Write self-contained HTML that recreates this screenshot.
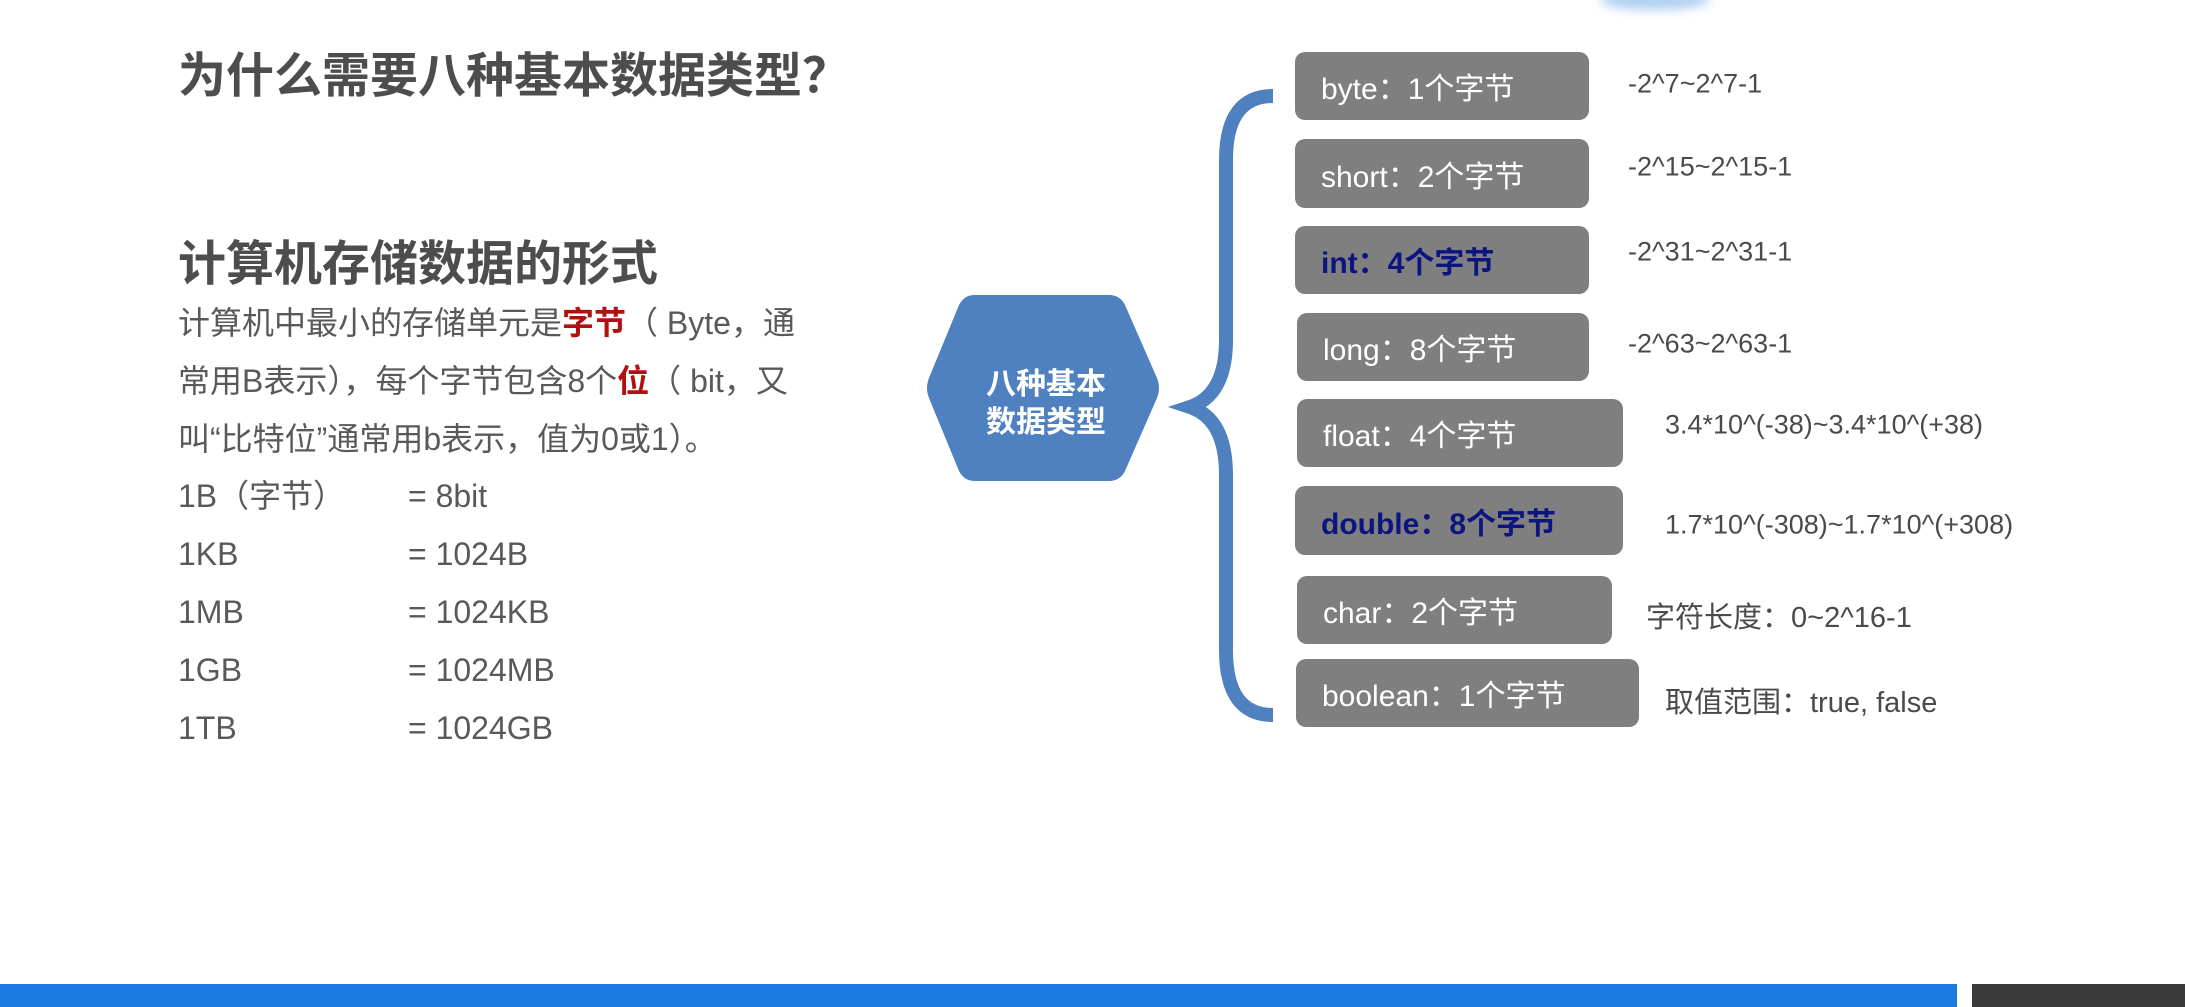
<!DOCTYPE html>
<html><head><meta charset="utf-8"><style>
*{margin:0;padding:0;box-sizing:border-box}
body{width:2185px;height:1007px;background:#fff;position:relative;overflow:hidden;font-family:"Liberation Sans","Noto Sans CJK SC",sans-serif;color:#595959}
.a{position:absolute;white-space:nowrap}
.t{font-weight:bold;color:#4d4d4d;font-size:48px}
.b{font-size:32px;line-height:58px}
.box{position:absolute;background:#7f7f7f;border-radius:10px;color:#fff;font-size:30px;padding-left:26px;display:flex;align-items:center}
.nv{color:#0c1480;font-weight:bold}
.r{position:absolute;font-size:27px;color:#4a4a4a;white-space:nowrap;transform:translateY(-50%)}
</style></head><body>
<div class="a" style="left:1600px;top:-10px;width:110px;height:20px;background:#9cc4ee;border-radius:50%;filter:blur(5px);opacity:.8"></div>
<div class="a t" style="left:178px;top:36px">为什么需要八种基本数据类型？</div>
<div class="a t" style="left:178px;top:224px">计算机存储数据的形式</div>
<div class="a b" style="left:178px;top:294px">计算机中最小的存储单元是<b style="color:#b01010">字节</b>（ Byte，通<br>常用B表示），每个字节包含8个<b style="color:#b01010">位</b>（ bit，又<br>叫“比特位”通常用b表示，值为0或1）。</div>
<div class="a b" style="left:178px;top:467px">1B（字节）<br>1KB<br>1MB<br>1GB<br>1TB</div>
<div class="a b" style="left:408px;top:467px">= 8bit<br>= 1024B<br>= 1024KB<br>= 1024MB<br>= 1024GB</div>
<svg class="a" style="left:0;top:0" width="2185" height="1007">
<path d="M975,295 L1109,295 Q1120,295 1125,305 L1157,378 Q1161,388 1157,398 L1125,471 Q1120,481 1109,481 L975,481 Q964,481 959,471 L929,398 Q925,388 929,378 L959,305 Q964,295 975,295Z" fill="#4f80c0"/>
<path d="M1273,96 Q1226,96 1226,160 L1226,340 Q1226,395 1190,407 Q1226,419 1226,475 L1226,650 Q1226,715 1273,715" fill="none" stroke="#4f80c0" stroke-width="14"/>
<text x="1046" y="394" font-size="30" font-weight="bold" fill="#fff" text-anchor="middle" font-family="Liberation Sans,Noto Sans CJK SC,sans-serif">八种基本</text>
<text x="1046" y="432" font-size="30" font-weight="bold" fill="#fff" text-anchor="middle" font-family="Liberation Sans,Noto Sans CJK SC,sans-serif">数据类型</text>
</svg>
<div class="box" style="left:1295px;top:52px;width:294px;height:68px">byte：1个字节</div>
<div class="box" style="left:1295px;top:139px;width:294px;height:69px">short：2个字节</div>
<div class="box" style="left:1295px;top:226px;width:294px;height:68px"><span class="nv">int：4个字节</span></div>
<div class="box" style="left:1297px;top:313px;width:292px;height:68px">long：8个字节</div>
<div class="box" style="left:1297px;top:399px;width:326px;height:68px">float：4个字节</div>
<div class="box" style="left:1295px;top:486px;width:328px;height:69px"><span class="nv">double：8个字节</span></div>
<div class="box" style="left:1297px;top:576px;width:315px;height:68px">char：2个字节</div>
<div class="box" style="left:1296px;top:659px;width:343px;height:68px">boolean：1个字节</div>
<div class="r" style="left:1628px;top:84px">-2^7~2^7-1</div>
<div class="r" style="left:1628px;top:167px">-2^15~2^15-1</div>
<div class="r" style="left:1628px;top:252px">-2^31~2^31-1</div>
<div class="r" style="left:1628px;top:344px">-2^63~2^63-1</div>
<div class="r" style="left:1665px;top:425px">3.4*10^(-38)~3.4*10^(+38)</div>
<div class="r" style="left:1665px;top:525px">1.7*10^(-308)~1.7*10^(+308)</div>
<div class="r" style="left:1646px;top:615px;font-size:29px">字符长度：0~2^16-1</div>
<div class="r" style="left:1665px;top:700px;font-size:29px">取值范围：true, false</div>
<div class="a" style="left:0;top:984px;width:1957px;height:23px;background:#1b7be0"></div>
<div class="a" style="left:1972px;top:984px;width:213px;height:23px;background:#3a3a3a"></div>
</body></html>
